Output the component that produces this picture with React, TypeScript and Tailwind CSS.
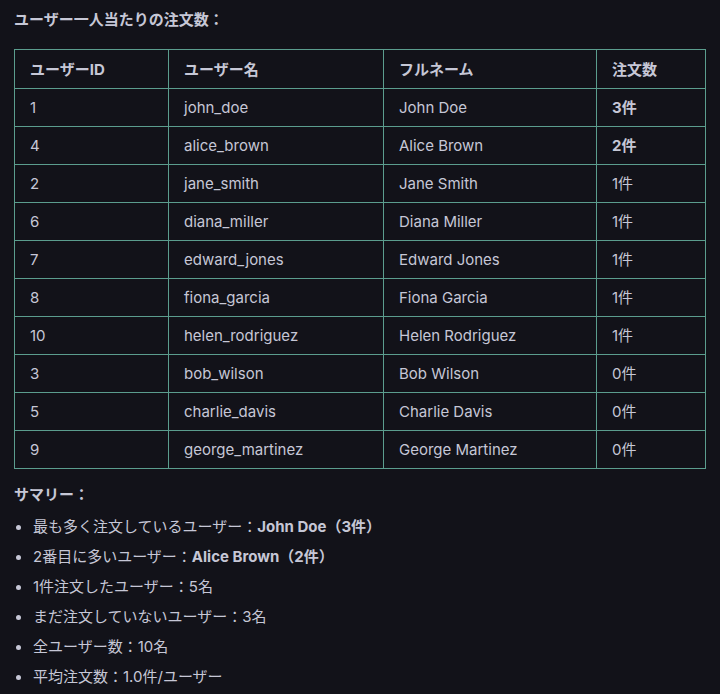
import React from 'react';

const rows: [string, string, string, string, boolean][] = [
    ['1', 'john_doe', 'John Doe', '3件', true],
    ['4', 'alice_brown', 'Alice Brown', '2件', true],
    ['2', 'jane_smith', 'Jane Smith', '1件', false],
    ['6', 'diana_miller', 'Diana Miller', '1件', false],
    ['7', 'edward_jones', 'Edward Jones', '1件', false],
    ['8', 'fiona_garcia', 'Fiona Garcia', '1件', false],
    ['10', 'helen_rodriguez', 'Helen Rodriguez', '1件', false],
    ['3', 'bob_wilson', 'Bob Wilson', '0件', false],
    ['5', 'charlie_davis', 'Charlie Davis', '0件', false],
    ['9', 'george_martinez', 'George Martinez', '0件', false],
];

const Bullet: React.FC<{ children: React.ReactNode }> = ({ children }) => (
    <li className="flex items-center h-5">
        <span className="w-[5px] h-[5px] rounded-full bg-[#c6c7d6] ml-[2px] mr-[12px]" />
        <span>{children}</span>
    </li>
);

export default function App() {
    const cell = 'border border-[#5b9d8e] px-[15px] py-[8.5px] text-left align-middle';
    return (
        <div
            className="min-h-[694px] w-[720px] bg-[#121219] text-[#c6c7d6] text-[15px] leading-5 px-[14px] pt-[10px]"
            style={{ fontFamily: 'Inter, "Noto Sans CJK JP", sans-serif' }}
        >
            <p className="font-bold">ユーザー一人当たりの注文数：</p>

            <table className="mt-[19px] border-collapse w-[692px]">
                <thead>
                    <tr className="font-bold">
                        <th className={`${cell} w-[154px] pt-[10px] pb-[8px]`}>ユーザーID</th>
                        <th className={`${cell} w-[215px] pt-[10px] pb-[8px]`}>ユーザー名</th>
                        <th className={`${cell} w-[213px] pt-[10px] pb-[8px]`}>フルネーム</th>
                        <th className={`${cell} pt-[10px] pb-[8px]`}>注文数</th>
                    </tr>
                </thead>
                <tbody>
                    {rows.map(r => (
                        <tr key={r[0]}>
                            <td className={cell}>{r[0]}</td>
                            <td className={cell}>{r[1]}</td>
                            <td className={cell}>{r[2]}</td>
                            <td className={`${cell} ${r[4] ? 'font-bold' : ''}`}>{r[3]}</td>
                        </tr>
                    ))}
                </tbody>
            </table>

            <p className="font-bold mt-[16px]">サマリー：</p>
            <ul className="mt-[12px] flex flex-col gap-[10px]">
                <Bullet>最も多く注文しているユーザー：<b>John Doe（3件）</b></Bullet>
                <Bullet>2番目に多いユーザー：<b>Alice Brown（2件）</b></Bullet>
                <Bullet>1件注文したユーザー：5名</Bullet>
                <Bullet>まだ注文していないユーザー：3名</Bullet>
                <Bullet>全ユーザー数：10名</Bullet>
                <Bullet>平均注文数：1.0件/ユーザー</Bullet>
            </ul>
        </div>
    );
}
